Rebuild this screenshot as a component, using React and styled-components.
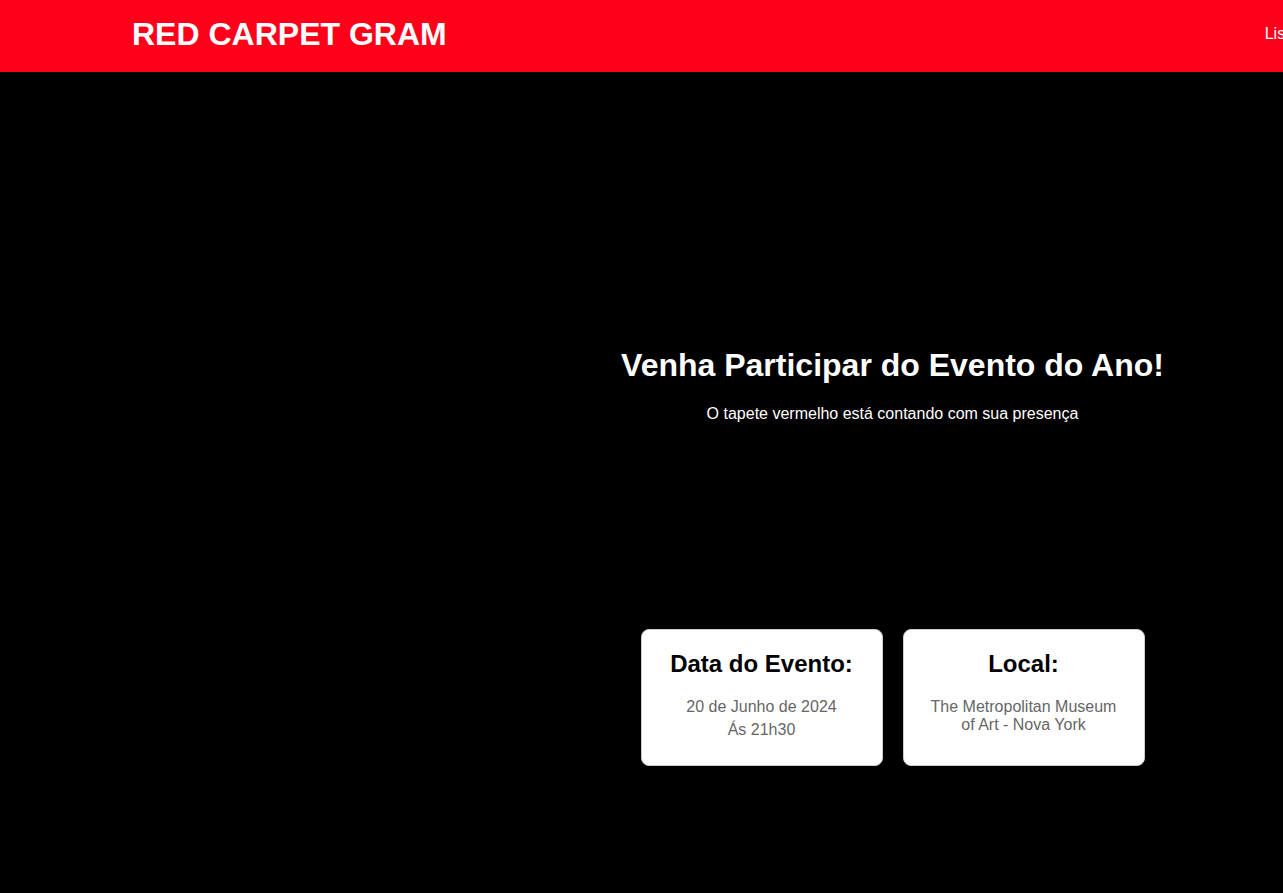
import React from "react";
import styled, { createGlobalStyle } from "styled-components";

const Global = createGlobalStyle`
  html, body { margin: 0; padding: 0; background: #000; overflow: hidden; }
  body { font-family: "Liberation Sans", Arial, sans-serif; }
  * { box-sizing: border-box; }
`;

const Header = styled.header`
  height: 72px;
  background: #ff001a;
  display: flex;
  align-items: center;
  padding: 0 0 4px 132px;
  overflow: hidden;
  white-space: nowrap;
`;

const Brand = styled.h1`
  margin: 0;
  font-size: 32px;
  font-weight: 700;
  color: #fff;
  flex-shrink: 0;
`;

const Nav = styled.nav`
  margin-left: 818px;
  display: flex;
  gap: 24px;
  flex-shrink: 0;
`;

const NavLink = styled.a`
  color: #fff;
  font-size: 16px;
  text-decoration: none;
`;

const Hero = styled.main`
  display: grid;
  grid-template-columns: 502px 1fr;
  min-height: 821px;
  background: #000;
`;

const ImageArea = styled.div`
  background: #000;
`;

const Content = styled.section`
  display: flex;
  flex-direction: column;
  align-items: center;
  padding-top: 275px;
  color: #fff;
  text-align: center;
`;

const Title = styled.h2`
  margin: 0;
  font-size: 32px;
  font-weight: 700;
`;

const Subtitle = styled.p`
  margin: 21px 0 0;
  font-size: 16px;
`;

const Cards = styled.div`
  display: flex;
  gap: 20px;
  margin-top: 206px;
`;

const Card = styled.div`
  width: 242px;
  background: #fff;
  border: 1px solid #ccc;
  border-radius: 8px;
  padding: 20px 20px 24px;
  text-align: center;
`;

const CardTitle = styled.h3`
  margin: 0 0 20px;
  font-size: 24px;
  font-weight: 700;
  color: #000;
`;

const CardText = styled.p`
  margin: ${(p) => (p.$tight ? "-3px 0 0" : "0")};
  font-size: 16px;
  color: #666;
  line-height: ${(p) => (p.$tight ? "23px" : "normal")};
`;

export default function App() {
  return (
    <>
      <Global />
      <Header>
        <Brand>RED CARPET GRAM</Brand>
        <Nav>
          <NavLink href="#">Lista de Convidados</NavLink>
          <NavLink href="#">Contato</NavLink>
        </Nav>
      </Header>
      <Hero>
        <ImageArea />
        <Content>
          <Title>Venha Participar do Evento do Ano!</Title>
          <Subtitle>O tapete vermelho está contando com sua presença</Subtitle>
          <Cards>
            <Card>
              <CardTitle>Data do Evento:</CardTitle>
              <CardText $tight>
                20 de Junho de 2024
                <br />
                Ás 21h30
              </CardText>
            </Card>
            <Card>
              <CardTitle>Local:</CardTitle>
              <CardText>
                The Metropolitan Museum
                <br />
                of Art - Nova York
              </CardText>
            </Card>
          </Cards>
        </Content>
      </Hero>
    </>
  );
}
